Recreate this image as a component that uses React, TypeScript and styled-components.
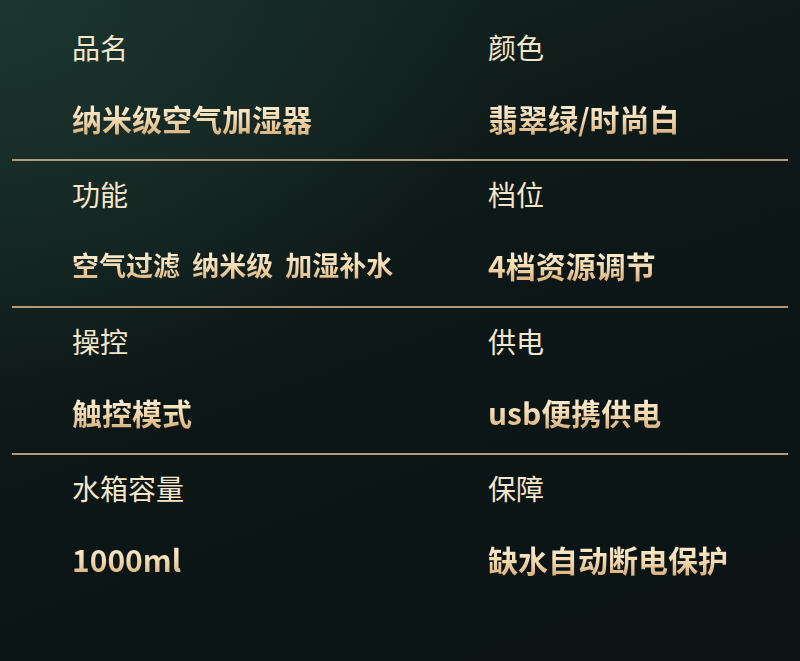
import React from "react";
import styled, { createGlobalStyle } from "styled-components";

const GlobalStyle = createGlobalStyle`
  html, body {
    margin: 0;
    padding: 0;
    background: #0c1515;
  }
  body {
    font-family: "Noto Sans CJK SC", "Noto Sans", sans-serif;
  }
`;

const Page = styled.div`
  width: 800px;
  height: 661px;
  box-sizing: border-box;
  padding: 14px 12px 0;
  overflow: hidden;
  background:
    radial-gradient(ellipse 520px 420px at 0% 0%, rgba(30, 58, 50, 0.8), rgba(30, 58, 50, 0) 100%),
    linear-gradient(160deg, #142622 0%, #0d1717 45%, #0b1313 100%);
`;

const Row = styled.div<{ $divider: boolean }>`
  display: grid;
  grid-template-columns: 416px 1fr;
  padding: 13px 0 21px 60px;
  border-bottom: ${(p) => (p.$divider ? "2px solid #b49a74" : "2px solid transparent")};
`;

const Cell = styled.div`
  display: flex;
  flex-direction: column;
`;

const Label = styled.div`
  font-size: 28px;
  line-height: 40px;
  font-weight: 400;
  color: #f4e6cb;
  white-space: nowrap;
`;

const Value = styled.div<{ $compact?: boolean }>`
  margin-top: 31px;
  font-size: ${(p) => (p.$compact ? "27px" : "30px")};
  word-spacing: ${(p) => (p.$compact ? "6px" : "0")};
  line-height: 40px;
  font-weight: 700;
  white-space: nowrap;
  align-self: flex-start;
  color: #f0d7ad;
  background: linear-gradient(180deg, #fdf0d8 10%, #f2d8ae 55%, #d7ae7a 95%);
  -webkit-background-clip: text;
  background-clip: text;
  -webkit-text-fill-color: transparent;
`;

type Item = { label: string; value: string; compact?: boolean };

const rows: [Item, Item][] = [
  [
    { label: "品名", value: "纳米级空气加湿器" },
    { label: "颜色", value: "翡翠绿/时尚白" },
  ],
  [
    { label: "功能", value: "空气过滤 纳米级 加湿补水", compact: true },
    { label: "档位", value: "4档资源调节" },
  ],
  [
    { label: "操控", value: "触控模式" },
    { label: "供电", value: "usb便携供电" },
  ],
  [
    { label: "水箱容量", value: "1000ml" },
    { label: "保障", value: "缺水自动断电保护" },
  ],
];

export default function App() {
  return (
    <>
      <GlobalStyle />
      <Page>
        {rows.map((pair, i) => (
          <Row key={i} $divider={i < rows.length - 1}>
            {pair.map((item) => (
              <Cell key={item.label}>
                <Label>{item.label}</Label>
                <Value $compact={item.compact}>{item.value}</Value>
              </Cell>
            ))}
          </Row>
        ))}
      </Page>
    </>
  );
}
